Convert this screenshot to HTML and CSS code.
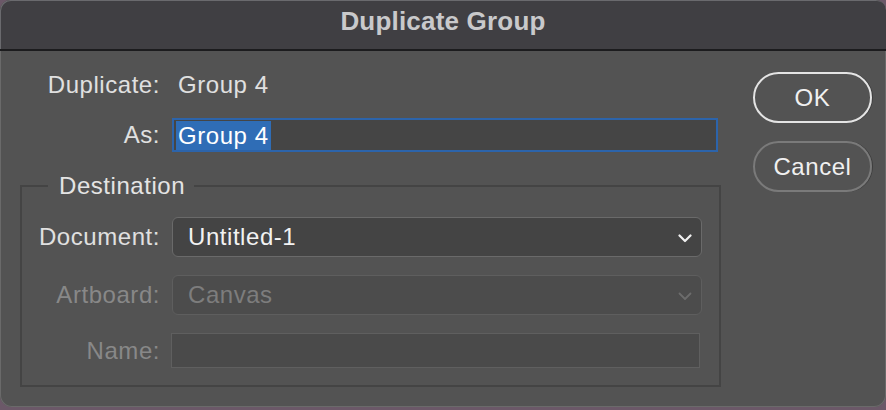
FILE: index.html
```html
<!DOCTYPE html>
<html lang="en">
<head>
<meta charset="utf-8">
<title>Duplicate Group</title>
<link rel="stylesheet" href="styles.css">
</head>
<body>
<div class="window">
  <div class="titlebar">Duplicate Group</div>
  <div class="content">
    <div class="form">
      <div class="row row-first">
        <span class="label">Duplicate:</span>
        <span class="value">Group 4</span>
      </div>
      <div class="row row-as">
        <span class="label">As:</span>
        <div class="text-input focused"><span class="selected">Group 4</span></div>
      </div>
      <fieldset class="group">
        <legend class="legend">Destination</legend>
        <div class="row row-doc">
          <span class="label">Document:</span>
          <div class="select">
            <span class="select-text">Untitled-1</span>
            <svg class="chevron" width="14" height="9" viewBox="0 0 14 9"><path d="M1.5 1.5 L7 7 L12.5 1.5" fill="none" stroke="#f2f2f2" stroke-width="2.2" stroke-linecap="round" stroke-linejoin="round"/></svg>
          </div>
        </div>
        <div class="row row-art disabled">
          <span class="label">Artboard:</span>
          <div class="select select-disabled">
            <span class="select-text">Canvas</span>
            <svg class="chevron" width="14" height="9" viewBox="0 0 14 9"><path d="M1.5 1.5 L7 7 L12.5 1.5" fill="none" stroke="#6c6c6c" stroke-width="1.8" stroke-linecap="round" stroke-linejoin="round"/></svg>
          </div>
        </div>
        <div class="row row-name disabled">
          <span class="label">Name:</span>
          <div class="name-input"></div>
        </div>
      </fieldset>
    </div>
    <div class="buttons">
      <button class="btn btn-ok">OK</button>
      <button class="btn btn-cancel">Cancel</button>
    </div>
  </div>
</div>
</body>
</html>
```

FILE: styles.css
```css
html, body {
  margin: 0;
  padding: 0;
}
body {
  width: 886px;
  height: 410px;
  background: #6b5868;
  overflow: hidden;
  font-family: "Liberation Sans", Arial, sans-serif;
  font-size: 24px;
  letter-spacing: 0.55px;
  color: #e2e2e2;
}
.window {
  width: 886px;
  height: 407px;
  background: #535353;
  border-radius: 10px 10px 12px 12px;
  overflow: hidden;
  box-shadow: inset 0 0 0 1px #6a6a6a;
  display: flex;
  flex-direction: column;
}
.titlebar {
  height: 49px;
  flex: none;
  background: #403f43;
  border-bottom: 2px solid #1c1c1e;
  color: #c9c9cb;
  font-weight: bold;
  font-size: 26px;
  letter-spacing: 0.2px;
  line-height: 42px;
  text-align: center;
  border-radius: 10px 10px 0 0;
  box-shadow: inset 1px 1px 0 #6a6a6e;
}
.content {
  display: flex;
  align-items: flex-start;
}
.form {
  width: 721px;
  flex: none;
}
.row {
  display: grid;
  grid-template-columns: 160px 1fr;
  column-gap: 12px;
  align-items: center;
}
.label {
  text-align: right;
  color: #e0e0e0;
  line-height: 28px;
}
.row-first {
  margin-top: 17px;
  height: 34px;
  width: 718px;
}
.value {
  padding-left: 6px;
  color: #e0e0e0;
  line-height: 28px;
}
.row-as {
  margin-top: 16px;
  height: 34px;
  width: 718px;
}
.text-input {
  height: 34px;
  box-sizing: border-box;
  background: #454545;
  display: flex;
  align-items: center;
  padding-left: 2px;
}
.text-input.focused {
  border: 2px solid #2c64ab;
}
.selected {
  background: #2f6db6;
  color: #ffffff;
  line-height: 29px;
  padding: 0 2px;
}
.group {
  margin: 20px 0 0 20px;
  padding: 0 0 17px 0;
  width: 701px;
  box-sizing: border-box;
  border: 2px solid #444444;
  min-inline-size: 0;
}
.legend {
  margin-left: 26px;
  padding: 0 9px 0 11px;
  line-height: 28px;
  color: #e4e4e4;
}
.group .row {
  grid-template-columns: 138px 530px;
}
.row-doc {
  margin-top: 17px;
  height: 40px;
}
.select {
  height: 40px;
  box-sizing: border-box;
  border: 1px solid #6a6a6a;
  border-radius: 6px;
  background: #444444;
  display: flex;
  align-items: center;
  justify-content: space-between;
  padding: 0 9px 0 15px;
}
.select-text {
  color: #f2f2f2;
  line-height: 28px;
}
.chevron {
  display: block;
  margin-top: 2px;
}
.row-art {
  margin-top: 18px;
  height: 40px;
}
.select-disabled {
  background: #4c4c4c;
  border-color: #5e5e5e;
}
.select-disabled .select-text {
  color: #7d7d7d;
}
.disabled .label {
  color: #888888;
}
.row-name {
  margin-top: 18px;
  height: 35px;
}
.name-input {
  height: 35px;
  width: 529px;
  margin-left: -1px;
  box-sizing: border-box;
  background: #4a4a4a;
  border: 1px solid #5f5f5f;
}
.buttons {
  margin-left: 32px;
  margin-top: 21px;
  display: flex;
  flex-direction: column;
  gap: 18px;
}
.btn {
  width: 119px;
  height: 51px;
  box-sizing: border-box;
  border-radius: 26px;
  background: transparent;
  font-family: "Liberation Sans", Arial, sans-serif;
  font-size: 24px;
  letter-spacing: 0.55px;
  padding: 0;
  color: #f0f0f0;
  box-shadow: 1px 0 0 #3e3e3e;
}
.btn-ok {
  border: 2px solid #e4e4e4;
}
.btn-cancel {
  border: 2px solid #7a7a7a;
}
```
